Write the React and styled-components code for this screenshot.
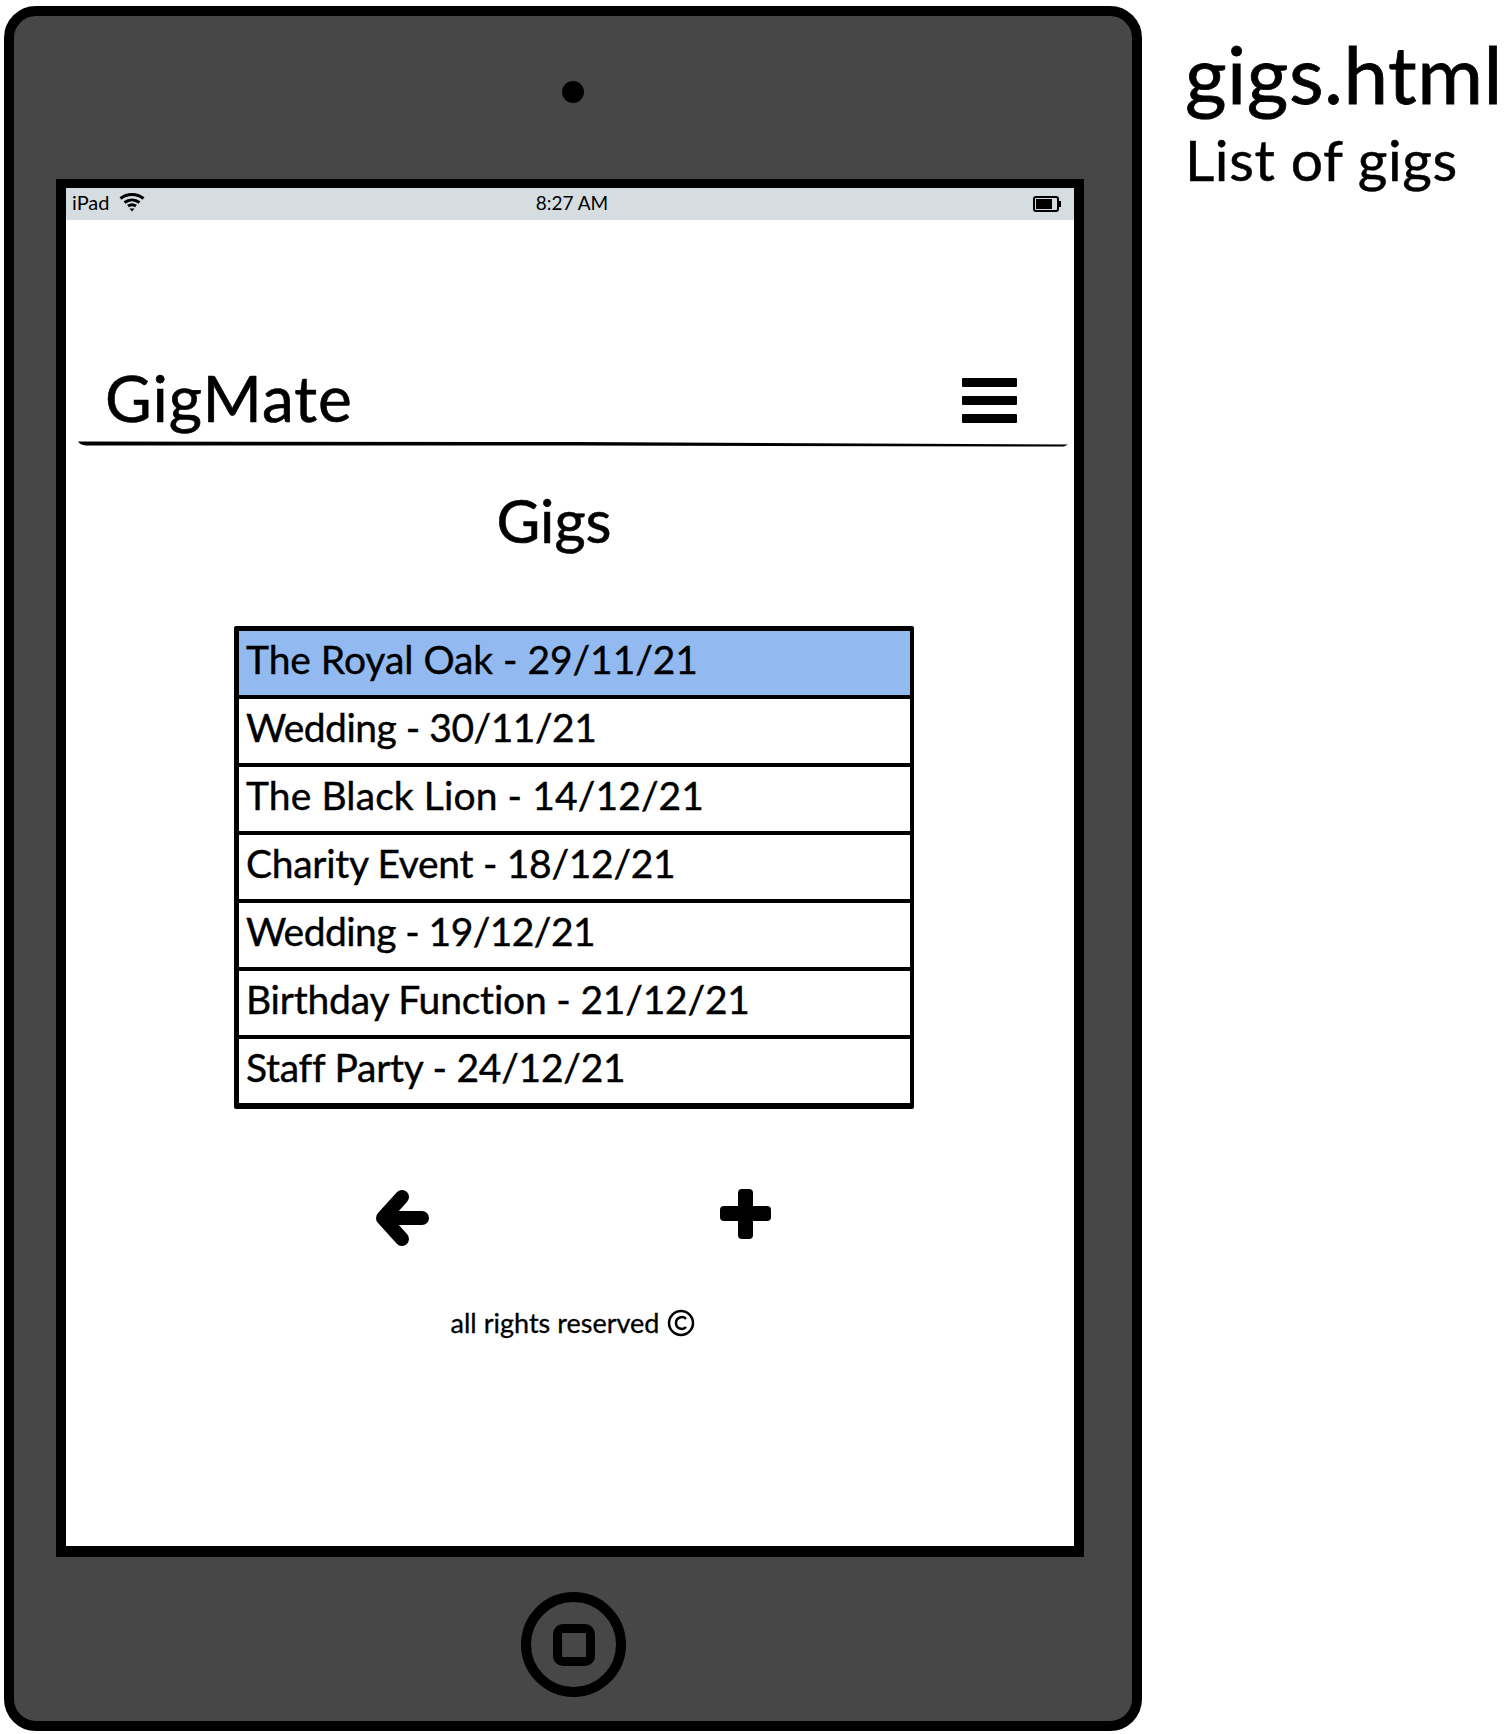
import styled, { createGlobalStyle } from 'styled-components'

const GlobalStyle = createGlobalStyle`
  html, body {
    margin: 0;
    padding: 0;
    background: #fff;
    color: #000;
    font-family: 'Lato', 'Noto Sans', sans-serif;
  }
`

const Page = styled.div`
  display: flex;
  align-items: flex-start;
  width: 1504px;
  height: 1734px;
  box-sizing: border-box;
  padding: 6px 0 0 4px;
`

const Tablet = styled.div`
  box-sizing: border-box;
  flex: none;
  width: 1138px;
  height: 1725px;
  padding: 60px 0 0 42px;
  background: #474747;
  border: 10px solid #000;
  border-radius: 32px;
  display: flex;
  flex-direction: column;
`

const Camera = styled.div`
  width: 22px;
  height: 22px;
  margin: 5px 0 76px 506px;
  border-radius: 50%;
  background: #000;
`

const Frame = styled.div`
  box-sizing: border-box;
  width: 1028px;
  height: 1378px;
  border: solid #000;
  border-width: 9px 10px 11px 10px;
  background: #fff;
  display: flex;
  flex-direction: column;
`

const StatusBar = styled.div`
  flex: none;
  box-sizing: border-box;
  height: 32px;
  padding: 0 12px 4px 6px;
  background: #d6dde0;
  display: grid;
  grid-template-columns: 1fr auto 1fr;
  align-items: center;
  font-size: 20px;
`

const Carrier = styled.div`
  display: flex;
  align-items: center;
  gap: 9px;
`

const Clock = styled.div`
  margin-left: 10px;
  font-size: 19px;
`

const BatterySlot = styled.div`
  display: flex;
  justify-content: flex-end;
  padding-top: 4px;
`

const Battery = styled.svg`
  width: 29px;
  height: 16px;
`

const Content = styled.div`
  flex: 1;
  display: flex;
  flex-direction: column;
  padding-top: 134px;
`

const NavBar = styled.div`
  display: flex;
  align-items: center;
  justify-content: space-between;
  height: 87px;
  padding: 0 57px 0 39px;
`

const Brand = styled.div`
  font-size: 64px;
  letter-spacing: 1px;
  line-height: 76px;
  -webkit-text-stroke: 0.6px #000;
`

const Burger = styled.div`
  display: flex;
  flex-direction: column;
  gap: 9px;
  margin-top: 5px;
`

const BurgerBar = styled.span`
  display: block;
  width: 55px;
  height: 9px;
  border-radius: 1px;
  background: #000;
`

const Rule = styled.svg`
  display: block;
  width: 990px;
  height: 8px;
  margin-left: 12px;
`

const Title = styled.h1`
  margin: 38px 0 0;
  padding-right: 32px;
  font-size: 60px;
  font-weight: 400;
  line-height: 66px;
  text-align: center;
  -webkit-text-stroke: 0.6px #000;
`

const GigList = styled.ul`
  box-sizing: border-box;
  width: 680px;
  margin: 73px 0 0 168px;
  padding: 0;
  list-style: none;
  border: solid #000;
  border-width: 5px 4px 2px 5px;
  border-radius: 2px;
`

const GigRow = styled.li`
  box-sizing: border-box;
  height: 68px;
  padding-left: 7px;
  border-bottom: 4px solid #000;
  background: ${({ $selected }) => ($selected ? '#92baf0' : '#fff')};
  font-size: 39px;
  line-height: 56px;
  letter-spacing: ${({ $tracking }) => $tracking}px;
  white-space: nowrap;
  -webkit-text-stroke: 0.4px #000;
`

const Actions = styled.div`
  display: flex;
  align-items: flex-start;
  gap: 289px;
  margin: 80px 0 0 309px;
`

const Icon = styled.svg`
  flex: none;
  display: block;
`

const Footer = styled.div`
  display: flex;
  align-items: center;
  justify-content: center;
  gap: 8px;
  margin-top: 59px;
  padding-left: 6px;
  font-size: 27px;
  line-height: 34px;
  -webkit-text-stroke: 0.3px #000;
`

const CopyMark = styled.svg`
  width: 28px;
  height: 28px;
`

const HomeButton = styled.div`
  box-sizing: border-box;
  width: 105px;
  height: 105px;
  margin: 35px 0 0 465px;
  border: 10px solid #000;
  border-radius: 50%;
  display: flex;
  align-items: center;
  justify-content: center;
`

const HomeSquare = styled.div`
  box-sizing: border-box;
  width: 42px;
  height: 42px;
  border: 9px solid #000;
  border-radius: 10px;
`

const Notes = styled.div`
  margin: 19px 0 0 43px;
`

const FileName = styled.div`
  font-size: 80px;
  line-height: 96px;
  letter-spacing: 0.5px;
  -webkit-text-stroke: 0.8px #000;
`

const FileNote = styled.div`
  margin-top: 5px;
  font-size: 57px;
  line-height: 66px;
  letter-spacing: 0.6px;
  -webkit-text-stroke: 0.5px #000;
`

const gigs = [
  { label: 'The Royal Oak - 29/11/21', tracking: -0.06 },
  { label: 'Wedding - 30/11/21', tracking: -0.5 },
  { label: 'The Black Lion - 14/12/21', tracking: 0.1 },
  { label: 'Charity Event - 18/12/21', tracking: -0.3 },
  { label: 'Wedding - 19/12/21', tracking: -0.57 },
  { label: 'Birthday Function - 21/12/21', tracking: -0.2 },
  { label: 'Staff Party - 24/12/21', tracking: -0.25 },
]

const Wifi = () => (
  <Icon width='28' height='20' viewBox='0 0 26 20' fill='none' stroke='#000' strokeWidth='3'>
    <path d='M1.5 6.5C8 1 18 1 24.5 6.5' />
    <path d='M5.5 10.5C10 7 16 7 20.5 10.5' />
    <path d='M9 14C11.5 12.4 14.5 12.4 17 14' />
    <path d='M10.5 16.5L13 19.5L15.5 16.5Z' fill='#000' stroke='none' />
  </Icon>
)

const App = () => {
  return (
    <Page>
      <GlobalStyle />
      <Tablet>
        <Camera />
        <Frame>
          <StatusBar>
            <Carrier>
              iPad
              <Wifi />
            </Carrier>
            <Clock>8:27 AM</Clock>
            <BatterySlot>
              <Battery viewBox='0 0 29 16'>
                <rect x='1' y='1' width='24' height='14' rx='2' fill='none' stroke='#000' strokeWidth='2' />
                <rect x='3' y='3' width='16' height='10' fill='#000' />
                <path d='M26 5h2v6h-2z' fill='#000' />
              </Battery>
            </BatterySlot>
          </StatusBar>
          <Content>
            <NavBar>
              <Brand>GigMate</Brand>
              <Burger>
                <BurgerBar />
                <BurgerBar />
                <BurgerBar />
              </Burger>
            </NavBar>
            <Rule viewBox='0 0 990 8' preserveAspectRatio='none'>
              <path d='M0 0.5L500 1L990 3.5L986 5.5L500 4.5L8 4.5Q2 4 0 0.5Z' fill='#000' />
            </Rule>
            <Title>Gigs</Title>
            <GigList>
              {gigs.map((gig, i) => (
                <GigRow key={gig.label} $selected={i === 0} $tracking={gig.tracking}>
                  {gig.label}
                </GigRow>
              ))}
            </GigList>
            <Actions>
              <Icon width='56' height='58' viewBox='0 0 56 58' fill='none' stroke='#000' strokeWidth='14' strokeLinecap='round' strokeLinejoin='round'>
                <path d='M27 8L8 29L27 50M10 29H47' />
              </Icon>
              <Icon width='51' height='50' viewBox='0 0 51 50' fill='#000'>
                <rect x='18' y='0' width='15' height='50' rx='4' />
                <rect x='0' y='17' width='51' height='15' rx='4' />
              </Icon>
            </Actions>
            <Footer>
              all rights reserved
              <CopyMark viewBox='0 0 28 28' fill='none' stroke='#000' strokeWidth='2.5'>
                <circle cx='14' cy='14' r='12' />
                <path d='M19 10C16 6.5 9 8 9 14C9 20 16 21.5 19 18' />
              </CopyMark>
            </Footer>
          </Content>
        </Frame>
        <HomeButton>
          <HomeSquare />
        </HomeButton>
      </Tablet>
      <Notes>
        <FileName>gigs.html</FileName>
        <FileNote>List of gigs</FileNote>
      </Notes>
    </Page>
  )
}

export default App
